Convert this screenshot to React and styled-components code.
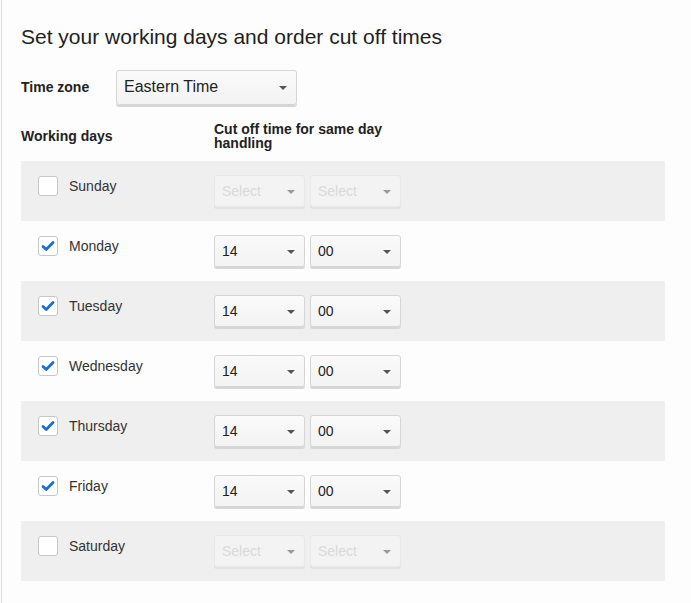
import React, { useState } from 'react';
import styled, { createGlobalStyle } from 'styled-components';

const GlobalStyle = createGlobalStyle`
  html, body {
    margin: 0;
    padding: 0;
    background: #fdfdfd;
  }
  body {
    font-family: "Liberation Sans", Arial, sans-serif;
    color: #333;
  }
`;

const Page = styled.div`
  margin-left: 1px;
  border-left: 1px solid #dcdcdc;
  min-height: 603px;
  padding: 25px 26px 0 19px;
  box-sizing: border-box;
`;

const Title = styled.h2`
  margin: 0;
  font-size: 21px;
  line-height: 24px;
  font-weight: 400;
  color: #1f1f1f;
`;

const ZoneRow = styled.div`
  display: flex;
  align-items: center;
  margin-top: 20px;
  height: 36px;
`;

const Label = styled.div`
  font-size: 14px;
  font-weight: 700;
  color: #222;
  width: ${(p) => p.width || 'auto'};
  line-height: 14px;
`;

const HeaderRow = styled.div`
  display: grid;
  grid-template-columns: 193px 175px;
  align-items: center;
  margin-top: 15px;
  height: 32px;
`;

const Rows = styled.div`
  margin-top: 9px;
  width: 644px;
`;

const DayRow = styled.div`
  display: grid;
  grid-template-columns: 193px auto;
  align-items: start;
  height: 60px;
  box-sizing: border-box;
  padding-top: 14px;
  background: ${(p) => (p.striped ? '#efefef' : 'transparent')};
`;

const DayCell = styled.label`
  display: flex;
  align-items: center;
  gap: 11px;
  padding-left: 17px;
  padding-top: 1px;
  font-size: 14px;
  color: #333;
  cursor: pointer;
`;

const Box = styled.span`
  width: 20px;
  height: 20px;
  box-sizing: border-box;
  border: 1px solid #c8c8c8;
  border-radius: 3px;
  background: #fff;
  display: flex;
  align-items: center;
  justify-content: center;
`;

const Selects = styled.div`
  display: flex;
  gap: 5px;
`;

const SelectBox = styled.div`
  position: relative;
  width: ${(p) => p.width}px;
  height: ${(p) => p.height}px;
  box-sizing: border-box;
  border: 1px solid ${(p) => (p.disabled ? '#e8e8e8' : '#d5d5d5')};
  border-radius: 3px;
  background: ${(p) =>
    p.disabled ? '#f3f3f3' : 'linear-gradient(#fafafa, #f3f3f3)'};
  box-shadow: 0 2px 0 ${(p) => (p.disabled ? '#e3e3e3' : '#d6d6d6')};
  display: flex;
  align-items: center;
  padding-left: 7px;
  font-size: ${(p) => p.fontSize}px;
  color: ${(p) => (p.disabled ? '#d9d9d9' : '#222')};
`;

const Caret = styled.span`
  position: absolute;
  right: 9px;
  top: 50%;
  margin-top: -1px;
  width: 0;
  height: 0;
  border-left: 4px solid transparent;
  border-right: 4px solid transparent;
  border-top: 4px solid ${(p) => (p.disabled ? '#9a9a9a' : '#555')};
`;

const Select = ({ value, width = 91, height = 32, fontSize = 14, disabled }) => (
  <SelectBox width={width} height={height} fontSize={fontSize} disabled={disabled}>
    {value}
    <Caret disabled={disabled} />
  </SelectBox>
);

const Check = () => (
  <svg width="14" height="12" viewBox="0 0 14 12">
    <path d="M2 6.5 L5.2 9.5 L12 2.5" fill="none" stroke="#1a6fcd" strokeWidth="2.8" strokeLinecap="round" strokeLinejoin="round" />
  </svg>
);

const initialDays = [
  { name: 'Sunday', on: false },
  { name: 'Monday', on: true },
  { name: 'Tuesday', on: true },
  { name: 'Wednesday', on: true },
  { name: 'Thursday', on: true },
  { name: 'Friday', on: true },
  { name: 'Saturday', on: false },
];

const App = () => {
  const [days, setDays] = useState(initialDays);

  const toggle = (i) =>
    setDays(days.map((d, j) => (j === i ? { ...d, on: !d.on } : d)));

  return (
    <>
      <GlobalStyle />
      <Page>
        <Title>Set your working days and order cut off times</Title>
        <ZoneRow>
          <Label width="95px">Time zone</Label>
          <Select value="Eastern Time" width={181} height={35} fontSize={16} />
        </ZoneRow>
        <HeaderRow>
          <Label>Working days</Label>
          <Label>Cut off time for same day handling</Label>
        </HeaderRow>
        <Rows>
          {days.map((d, i) => (
            <DayRow key={d.name} striped={i % 2 === 0}>
              <DayCell onClick={() => toggle(i)}>
                <Box>{d.on && <Check />}</Box>
                {d.name}
              </DayCell>
              <Selects>
                <Select value={d.on ? '14' : 'Select'} disabled={!d.on} />
                <Select value={d.on ? '00' : 'Select'} disabled={!d.on} />
              </Selects>
            </DayRow>
          ))}
        </Rows>
      </Page>
    </>
  );
};

export default App;
